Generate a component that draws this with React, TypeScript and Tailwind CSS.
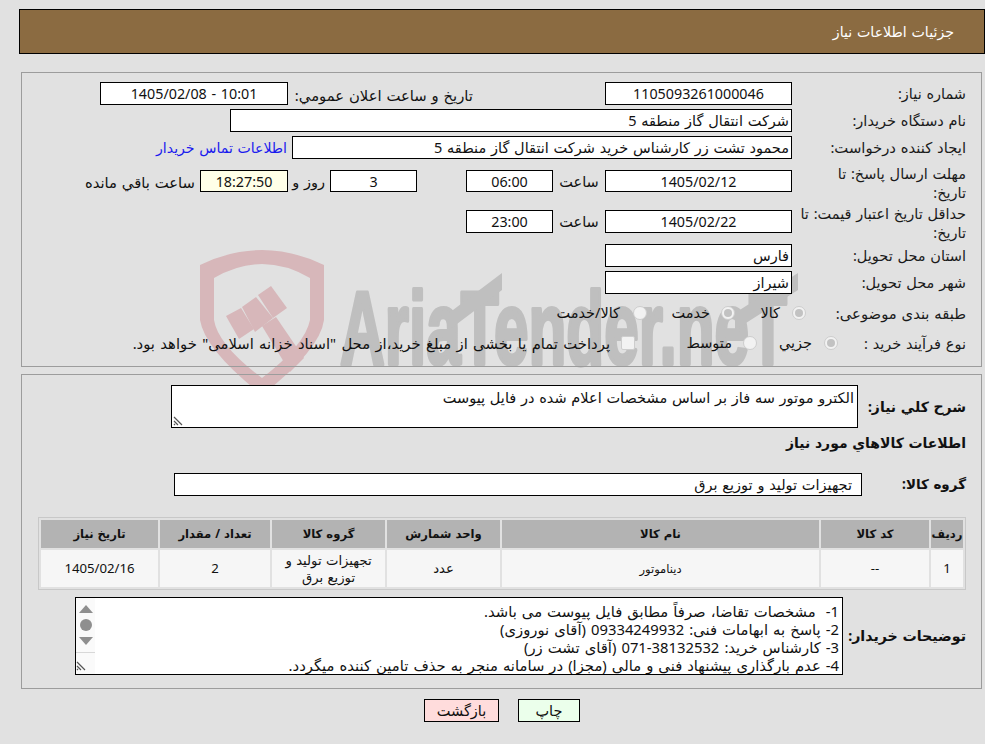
function Field({ className, children }: { className: string; children?: React.ReactNode }) {
  return <div className={`shrink-0 border border-black bg-white leading-[21px] ${className}`}>{children}</div>;
}

function Label({ children, className = "" }: { children: React.ReactNode; className?: string }) {
  return <div className={`w-[174px] shrink-0 pl-[4px] leading-[18.5px] text-[#1a1a1a] ${className}`}>{children}</div>;
}

function Radio({ on }: { on?: boolean }) {
  return (
    <span className="flex h-[14px] w-[14px] shrink-0 items-center justify-center rounded-full border border-[#cdcdcd] bg-[#f2f2f2]">
      {on && <span className="h-[8px] w-[8px] rounded-full bg-[#c2c2c2]" />}
    </span>
  );
}

function Grip({ className = "" }: { className?: string }) {
  return (
    <svg className={className} width="10" height="10" viewBox="0 0 10 10">
      <path d="M1 1 L9 9 M1 5 L5 9 M1 8 L2 9" stroke="#555" strokeWidth="1.2" fill="none" />
    </svg>
  );
}

function Watermark() {
  return (
    <svg className="pointer-events-none absolute left-0 top-0 [direction:ltr]" width="985" height="400" viewBox="0 0 985 400">
      <path
        fillRule="evenodd"
        fill="#d7b7ba"
        d="M200 265 Q262 235 324 265 L324 320 Q320 350 262 395 Q205 350 200 320 Z M214 278 Q262 250 310 278 L310 320 Q305 345 262 378 Q218 345 214 320 Z"
      />
      <g fill="#d7b7ba">
        <path d="M226 316 L241 308 L254 329 L239 339 Z" />
        <path d="M242 307 L256 297 L273 318 L255 332 Z" />
        <path d="M258 295 L271 286 L287 308 L273 318 Z" />
        <path d="M262 326 L276 317 L304 358 L290 372 Z" />
      </g>
      <text
        x="340"
        y="364"
        direction="ltr"
        textLength="447"
        lengthAdjust="spacingAndGlyphs"
        fill="#bfbfbf"
        stroke="#bfbfbf"
        strokeWidth="4"
        strokeLinejoin="round"
        fontFamily="'Liberation Sans Narrow','Liberation Sans',sans-serif"
        fontWeight="700"
        fontSize="103"
        className="[word-spacing:0]"
      >
        AriaTender.neT
      </text>
      <path d="M449 313 L502 273 L502 290 L449 330 Z M735 313 L798 273 L798 290 L735 330 Z" fill="#bfbfbf" />
    </svg>
  );
}

export default function App() {
  return (
    <div
      dir="rtl"
      className="relative h-[744px] w-[985px] overflow-hidden bg-[#e1e1e1] pl-[19px] pt-[9px] font-['Noto_Sans','DejaVu_Sans',sans-serif] text-[14.5px] text-[#111] [word-spacing:1px]"
    >
      <Watermark />

      <div className="relative flex h-[45px] items-center border border-black bg-[#8b6b41] pr-[30px] text-[14.2px] text-white">
        جزئیات اطلاعات نیاز
      </div>

      <div className="relative mr-[3px] mt-[18px] h-[295px] w-[961px] border border-[#9c9c9c] pr-[15px] pt-[9px]">
        <div className="flex h-[27px] items-start">
          <Label className="mt-[2px]">شماره نیاز:</Label>
          <Field className="h-[23px] w-[187px] text-center text-[14.3px]">1105093261000046</Field>
          <div className="mr-[132px] mt-[2px] w-[185px] text-[14.8px]">تاریخ و ساعت اعلان عمومي:</div>
          <Field className="h-[23px] w-[188px] text-center text-[14.3px]">10:01 - 1405/02/08</Field>
        </div>
        <div className="flex h-[27px] items-start">
          <Label className="mt-[2px]">نام دستگاه خریدار:</Label>
          <Field className="h-[23px] w-[562px] pr-[2px]">شرکت انتقال گاز منطقه 5</Field>
        </div>
        <div className="flex h-[34px] items-start">
          <Label className="mt-[2px] text-[14.8px]">ایجاد کننده درخواست:</Label>
          <Field className="h-[23px] w-[500px] pr-[2px]">محمود تشت زر کارشناس خرید شرکت انتقال گاز منطقه 5</Field>
          <div className="mr-[5px] mt-[1px] text-[14.1px] text-[#1a1aee]">اطلاعات تماس خریدار</div>
        </div>
        <div className="flex h-[40px] items-start">
          <Label className="-mt-[6px]">
            مهلت ارسال پاسخ: تا
            <br />
            تاریخ:
          </Label>
          <Field className="h-[22px] w-[187px] text-center text-[14.3px]">1405/02/12</Field>
          <div className="mt-[1px] w-[52px] text-center">ساعت</div>
          <Field className="h-[22px] w-[87px] text-center text-[14.3px]">06:00</Field>
          <Field className="mr-[49px] h-[22px] w-[87px] text-center text-[14.3px]">3</Field>
          <div className="mt-[1px] w-[42px] pr-[5px]">روز و</div>
          <Field className="h-[22px] w-[88px] !bg-[#ffffe8] text-center text-[14.3px]">18:27:50</Field>
          <div className="mr-[5px] mt-[1px] text-[14.8px]">ساعت باقي مانده</div>
        </div>
        <div className="flex h-[34px] items-start">
          <Label className="-mt-[6px]">حداقل تاریخ اعتبار قیمت: تا تاریخ:</Label>
          <Field className="h-[23px] w-[187px] text-center text-[14.3px]">1405/02/22</Field>
          <div className="mt-[1px] w-[52px] text-center">ساعت</div>
          <Field className="h-[23px] w-[87px] text-center text-[14.3px]">23:00</Field>
        </div>
        <div className="flex h-[27px] items-start">
          <Label className="mt-[2px]">استان محل تحویل:</Label>
          <Field className="h-[23px] w-[187px] pr-[2px]">فارس</Field>
        </div>
        <div className="flex h-[27px] items-start">
          <Label className="mt-[2px]">شهر محل تحویل:</Label>
          <Field className="h-[23px] w-[187px] pr-[2px]">شیراز</Field>
        </div>
        <div className="flex h-[30px] items-center">
          <Label className="!w-[160px] text-[14.8px]">طبقه بندی موضوعی:</Label>
          <Radio on />
          <span className="mr-[12px] w-[45px]">کالا</span>
          <Radio on />
          <span className="mr-[11px] w-[63px]">خدمت</span>
          <Radio />
          <span className="mr-[13px]">کالا/خدمت</span>
        </div>
        <div className="flex h-[30px] items-center">
          <Label className="!w-[128px]">نوع فرآیند خرید :</Label>
          <Radio on />
          <span className="mr-[12px] w-[55px]">جزیي</span>
          <Radio />
          <span className="mr-[11px] w-[97px]">متوسط</span>
          <span className="h-[14px] w-[14px] shrink-0 rounded-[2px] border border-[#cdcdcd] bg-[#f2f2f2]" />
          <span className="mr-[11px] text-[14.8px] [word-spacing:1.5px]">پرداخت تمام یا بخشی از مبلغ خرید،از محل "اسناد خزانه اسلامی" خواهد بود.</span>
        </div>
      </div>

      <div className="relative mr-[3px] mt-[7px] h-[315px] w-[961px] border border-[#9c9c9c] pr-[15px] pt-[10px]">
        <div className="flex items-start">
          <div className="w-[108px] shrink-0 pt-[11px] text-[14px] font-bold">شرح کلي نیاز:</div>
          <div className="relative h-[43px] w-[687px] border border-black bg-white pr-[3px] leading-[22px]">
            الکترو موتور سه فاز بر اساس مشخصات اعلام شده در فایل پیوست
            <Grip className="absolute bottom-[1px] left-[1px]" />
          </div>
        </div>
        <div className="mt-[4px] text-[14px] font-bold leading-[22px]">اطلاعات کالاهاي مورد نیاز</div>
        <div className="mt-[19px] flex items-center">
          <div className="w-[104px] shrink-0 text-[13.5px] font-bold">گروه کالا:</div>
          <Field className="h-[23px] w-[688px] pr-[9px]">تجهیزات تولید و توزیع برق</Field>
        </div>

        <table className="mt-[21px] w-[928px] table-fixed border-separate border-spacing-[2px] border border-[#c8c8c8] text-center text-[13.2px]">
          <thead>
            <tr className="h-[28px] bg-[#b3b3b3] text-[11.6px] font-bold">
              <th className="w-[32px] font-bold">ردیف</th>
              <th className="w-[108px] font-bold">کد کالا</th>
              <th className="w-[317px] font-bold">نام کالا</th>
              <th className="w-[113px] font-bold">واحد شمارش</th>
              <th className="w-[113px] font-bold">گروه کالا</th>
              <th className="w-[110px] font-bold">تعداد / مقدار</th>
              <th className="font-bold">تاریخ نیاز</th>
            </tr>
          </thead>
          <tbody>
            <tr className="h-[37px] bg-[#f6f6f6] leading-[17px]">
              <td>1</td>
              <td>--</td>
              <td className="text-[11.5px]">دیناموتور</td>
              <td>عدد</td>
              <td>تجهیزات تولید و توزیع برق</td>
              <td>2</td>
              <td>1405/02/16</td>
            </tr>
          </tbody>
        </table>

        <div className="mt-[7px] flex items-center">
          <div className="w-[123px] shrink-0 text-[14.2px] font-bold">توضیحات خریدار:</div>
          <div className="relative h-[78px] w-[768px] whitespace-pre border border-black bg-white pr-[3px] pt-[4px] text-[14.8px] leading-[18px] [word-spacing:1.2px]">
            <div>1-  مشخصات تقاضا، صرفاً مطابق فایل پیوست می باشد.</div>
            <div>2- پاسخ به ابهامات فنی: 09334249932 (آقای نوروزی)</div>
            <div>3- کارشناس خرید: 38132532-071 (آقای تشت زر)</div>
            <div>4- عدم بارگذاری پیشنهاد فنی و مالی (مجزا) در سامانه منجر به حذف تامین کننده میگردد.</div>
            <div className="absolute bottom-0 left-0 top-0 flex w-[19px] flex-col items-center bg-[#fafafa]">
              <svg className="mt-[7px]" width="14" height="8" viewBox="0 0 14 8">
                <path d="M7 0 L14 8 L0 8Z" fill="#8f8f8f" />
              </svg>
              <span className="mt-[6px] h-[12px] w-[12px] rounded-full bg-[#8f8f8f]" />
              <svg className="mt-[6px]" width="14" height="8" viewBox="0 0 14 8">
                <path d="M0 0 L14 0 L7 8Z" fill="#8f8f8f" />
              </svg>
              <div className="mt-[7px] flex h-[20px] w-full items-end justify-end border-t border-[#d8d8d8]">
                <Grip className="mb-[1px] mr-[8px]" />
              </div>
            </div>
          </div>
        </div>
      </div>

      <div className="relative mr-[405px] mt-[10px] flex gap-[19px]">
        <button className="h-[23px] w-[62px] border border-black bg-[#ebffeb]">چاپ</button>
        <button className="h-[23px] w-[75px] border border-black bg-[#ffdcdc]">بازگشت</button>
      </div>
    </div>
  );
}
